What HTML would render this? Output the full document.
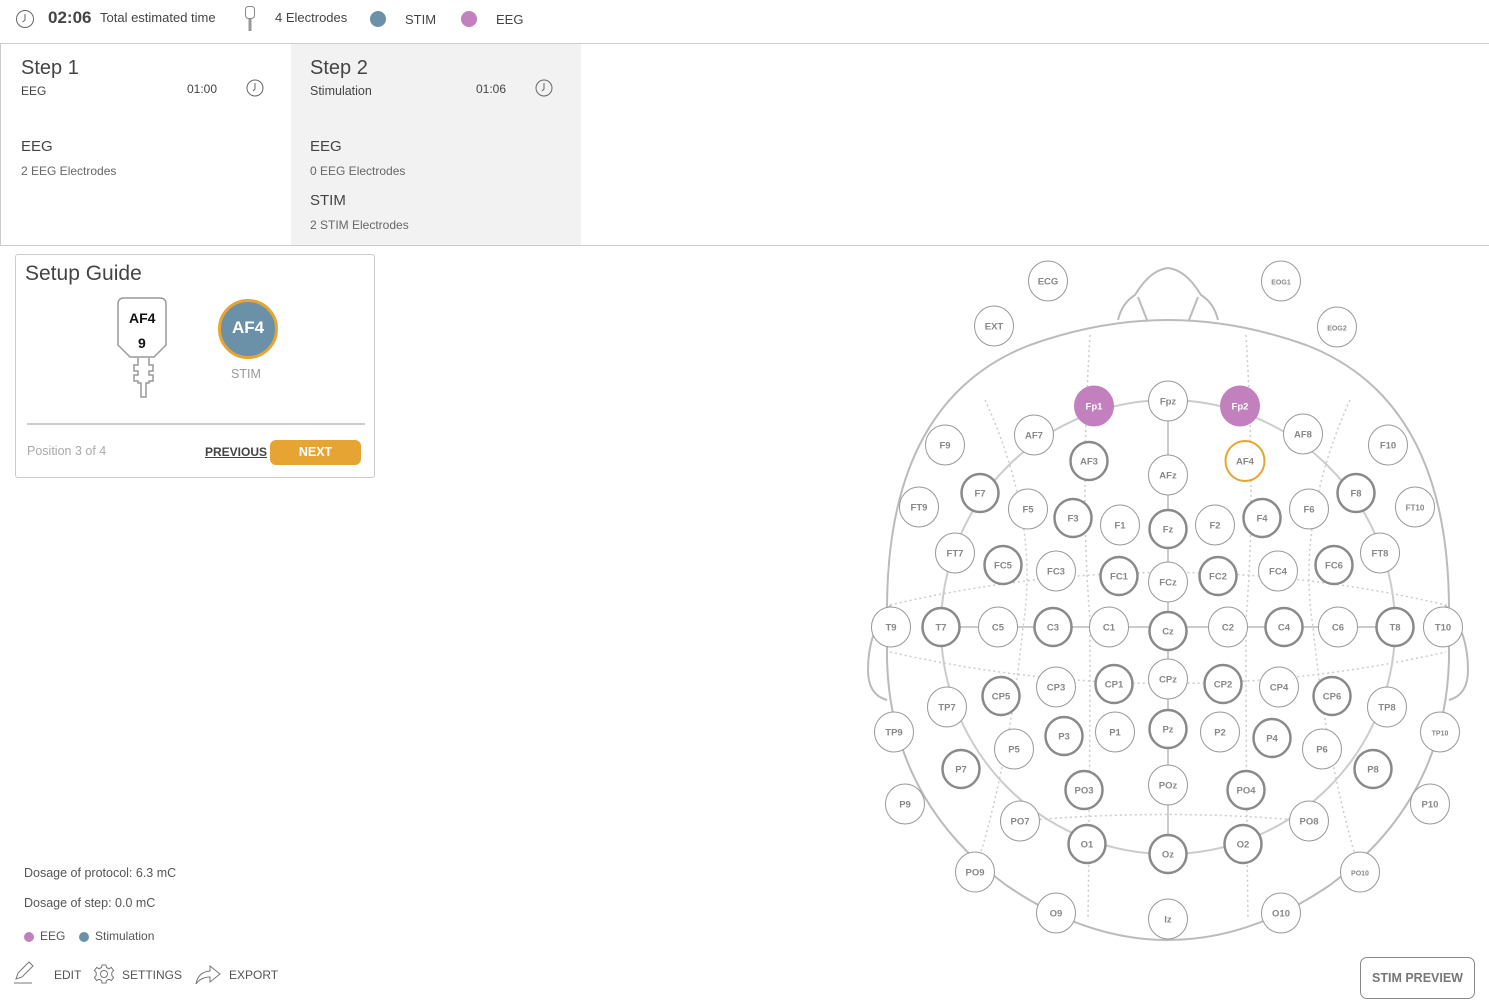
<!DOCTYPE html>
<html><head><meta charset="utf-8"><style>
*{box-sizing:border-box;margin:0;padding:0}
body{width:1489px;height:1008px;overflow:hidden;background:#fff;font-family:"Liberation Sans",sans-serif;color:#444;position:relative}
.abs{position:absolute}
.top{position:absolute;left:0;top:0;width:1489px;height:44px;border-bottom:1px solid #ccc}
.card{position:absolute;top:44px;height:202px;width:290px}
.t{position:absolute;white-space:nowrap}
</style></head><body>
<div class="top">
<svg class="abs" style="left:15px;top:9px" width="20" height="20"><circle cx="10" cy="10" r="8.5" fill="none" stroke="#666" stroke-width="1"/><path d="M10 5V11L7.5 13" fill="none" stroke="#666"/></svg>
<div class="t" style="left:48px;top:8px;font-size:17px;font-weight:bold;color:#444">02:06</div>
<div class="t" style="left:100px;top:10px;font-size:13px;color:#444">Total estimated time</div>
<svg class="abs" style="left:242px;top:5px" width="16" height="28"><rect x="3.5" y="1.5" width="9" height="12" rx="3" fill="none" stroke="#888"/><rect x="6.5" y="14" width="3" height="12" fill="#999"/></svg>
<div class="t" style="left:275px;top:10px;font-size:13px">4 Electrodes</div>
<div class="abs" style="left:370px;top:11px;width:16px;height:16px;border-radius:50%;background:#6b91a9"></div>
<div class="t" style="left:405px;top:12px;font-size:13px">STIM</div>
<div class="abs" style="left:461px;top:11px;width:16px;height:16px;border-radius:50%;background:#c280bf"></div>
<div class="t" style="left:496px;top:12px;font-size:13px">EEG</div>
</div>
<div class="card" style="left:0;border-left:1px solid #ccc;border-bottom:1px solid #ccc;width:291px">
<div class="t" style="left:20px;top:13px;font-size:20px;color:#444">Step 1</div>
<div class="t" style="left:20px;top:40px;font-size:12px">EEG</div>
<div class="t" style="left:186px;top:38px;font-size:12px">01:00</div>
<svg class="abs" style="left:245px;top:35px" width="18" height="18"><circle cx="9" cy="9" r="8" fill="none" stroke="#666"/><path d="M9 4V10L7 12" fill="none" stroke="#666"/></svg>
<div class="t" style="left:20px;top:94px;font-size:15px">EEG</div>
<div class="t" style="left:20px;top:120px;font-size:12px;color:#666">2 EEG Electrodes</div>
</div>
<div class="card" style="left:291px;background:#f2f2f2;border-bottom:1px solid #ccc">
<div class="t" style="left:19px;top:13px;font-size:20px;color:#444">Step 2</div>
<div class="t" style="left:19px;top:40px;font-size:12.5px">Stimulation</div>
<div class="t" style="left:185px;top:38px;font-size:12px">01:06</div>
<svg class="abs" style="left:244px;top:35px" width="18" height="18"><circle cx="9" cy="9" r="8" fill="none" stroke="#666"/><path d="M9 4V10L7 12" fill="none" stroke="#666"/></svg>
<div class="t" style="left:19px;top:94px;font-size:15px">EEG</div>
<div class="t" style="left:19px;top:120px;font-size:12px;color:#666">0 EEG Electrodes</div>
<div class="t" style="left:19px;top:148px;font-size:15px">STIM</div>
<div class="t" style="left:19px;top:174px;font-size:12px;color:#666">2 STIM Electrodes</div>
</div>
<div class="abs" style="left:581px;top:245px;width:908px;border-top:1px solid #ccc"></div>

<div class="abs" style="left:15px;top:254px;width:360px;height:224px;border:1px solid #ccc;border-radius:3px">
<div class="t" style="left:9px;top:7px;font-size:21px;color:#444">Setup Guide</div>
<svg class="abs" style="left:100px;top:40px" width="56" height="106">
<path d="M8 3H44Q50 3 50 9V50L38 62H14L2 50V9Q2 3 8 3Z" fill="#fff" stroke="#999" stroke-width="1.5"/>
<path d="M22 63V70H18V76H22V80H18V86H22V88H25V102H30V88H33V86H37V80H33V76H37V70H33V63" fill="none" stroke="#999" stroke-width="1.5"/>
</svg>
<div class="t" style="left:113px;top:55px;font-size:14px;font-weight:bold;color:#111">AF4</div>
<div class="t" style="left:122px;top:80px;font-size:14px;font-weight:bold;color:#111">9</div>
<div class="abs" style="left:202px;top:44px;width:60px;height:60px;border-radius:50%;background:#6b91a9;border:3px solid #e6a532"></div>
<div class="t" style="left:202px;top:63px;width:60px;text-align:center;font-size:17px;font-weight:bold;color:#fff">AF4</div>
<div class="t" style="left:215px;top:112px;font-size:12.5px;color:#999">STIM</div>
<div class="abs" style="left:11px;top:168px;width:338px;border-top:2px solid #ccc"></div>
<div class="t" style="left:11px;top:189px;font-size:12.5px;color:#aaa">Position 3 of 4</div>
<div class="t" style="left:189px;top:190px;font-size:12px;font-weight:bold;color:#444;text-decoration:underline">PREVIOUS</div>
<div class="abs" style="left:254px;top:185px;width:91px;height:25px;border-radius:6px;background:#e6a532;color:#fff;font-size:12.5px;font-weight:bold;text-align:center;line-height:25px">NEXT</div>
</div>

<div class="t" style="left:24px;top:866px;font-size:12.5px;color:#555">Dosage of protocol: 6.3 mC</div>
<div class="t" style="left:24px;top:896px;font-size:12.5px;color:#555">Dosage of step: 0.0 mC</div>
<div class="abs" style="left:24px;top:932px;width:10px;height:10px;border-radius:50%;background:#c280bf"></div>
<div class="t" style="left:40px;top:929px;font-size:12px;color:#555">EEG</div>
<div class="abs" style="left:79px;top:932px;width:10px;height:10px;border-radius:50%;background:#6b91a9"></div>
<div class="t" style="left:95px;top:929px;font-size:12px;color:#555">Stimulation</div>
<svg class="abs" style="left:12px;top:961px" width="24" height="24"><path d="M4 18L6 12L17 1L21 5L10 16Z" fill="none" stroke="#777"/><path d="M2 22H20" stroke="#777"/></svg>
<div class="t" style="left:54px;top:968px;font-size:12px;color:#555">EDIT</div>
<svg class="abs" style="left:93px;top:963px" width="22" height="22"><circle cx="11" cy="11" r="3.5" fill="none" stroke="#777"/><path d="M9 2H13L13.5 4.5L16 5.8L18.3 4.4L20.6 7.6L18.8 9.5V12.5L20.6 14.4L18.3 17.6L16 16.2L13.5 17.5L13 20H9L8.5 17.5L6 16.2L3.7 17.6L1.4 14.4L3.2 12.5V9.5L1.4 7.6L3.7 4.4L6 5.8L8.5 4.5Z" fill="none" stroke="#777"/></svg>
<div class="t" style="left:122px;top:968px;font-size:12px;color:#555">SETTINGS</div>
<svg class="abs" style="left:194px;top:962px" width="28" height="24"><path d="M2 22Q4 10 16 9V4L26 12L16 20V15Q7 15 2 22Z" fill="none" stroke="#777"/></svg>
<div class="t" style="left:229px;top:968px;font-size:12px;color:#555">EXPORT</div>
<div class="abs" style="left:1360px;top:957px;width:115px;height:42px;border:1.5px solid #888;border-radius:7px;text-align:center;line-height:40px;font-size:12.5px;font-weight:bold;color:#777">STIM PREVIEW</div>

<svg class="abs" style="left:0;top:0" width="1489" height="1008" font-family="Liberation Sans, sans-serif">
<g fill="none" stroke="#bbb" stroke-width="2">
<path d="M1118 320Q1122 303 1135 295Q1150 270 1168 268Q1186 270 1201 295Q1214 303 1218 320"/>
<path d="M1138 297L1147 320M1198 297L1189 320"/>
<path d="M887 610Q887 400 1030 345Q1100 320 1168 320Q1236 320 1306 345Q1449 400 1449 610L1449 660Q1445 800 1330 885Q1250 940 1168 940Q1086 940 1006 885Q891 800 887 660Z"/>
<path d="M891 605Q868 630 868 670Q868 695 887 700M1445 605Q1468 630 1468 670Q1468 695 1449 700"/>
</g>
<g fill="none" stroke="#ccc" stroke-width="2">
<circle cx="1168" cy="627" r="227"/>
<path d="M1168 401V854M941 627H1395"/>
</g>
<g fill="none" stroke="#ccc" stroke-width="1.5" stroke-dasharray="2 3">
<path d="M890 605Q1168 540 1446 605"/>
<path d="M890 652Q1168 715 1446 652"/>
<path d="M1020 821Q1168 808 1309 821"/>
<path d="M1090 335Q1080 500 1090 620Q1090 780 1088 920"/>
<path d="M1246 335Q1256 500 1246 620Q1246 780 1248 920"/>
<path d="M985 400Q1040 520 1023 627Q1010 760 975 872"/>
<path d="M1350 400Q1296 520 1313 627Q1326 760 1360 872"/>
</g>
<g id="els" font-size="9.5" font-weight="bold" text-anchor="middle" fill="#888"></g>
</svg>
<script>
var E=[["ECG",1048,281],["EOG1",1281,281,0,7],["EXT",994,326],["EOG2",1337,327,0,7],
["Fp1",1094,406,"p"],["Fpz",1168,401],["Fp2",1240,406,"p"],
["AF7",1034,435],["AF3",1089,461,1],["AFz",1168,475],["AF4",1245,461,"o"],["AF8",1303,434],
["F9",945,445],["F10",1388,445],
["F7",980,493,1],["F5",1028,509],["F3",1073,518,1],["F1",1120,525],["Fz",1168,529,1],["F2",1215,525],["F4",1262,518,1],["F6",1309,509],["F8",1356,493,1],
["FT9",919,507],["FT10",1415,507,0,8],
["FT7",955,553],["FC5",1003,565,1],["FC3",1056,571],["FC1",1119,576,1],["FCz",1168,582],["FC2",1218,576,1],["FC4",1278,571],["FC6",1334,565,1],["FT8",1380,553],
["T9",891,627],["T7",941,627,1],["C5",998,627],["C3",1053,627,1],["C1",1109,627],["Cz",1168,631,1],["C2",1228,627],["C4",1284,627,1],["C6",1338,627],["T8",1395,627,1],["T10",1443,627],
["CP5",1001,696,1],["CP3",1056,687],["CP1",1114,684,1],["CPz",1168,679],["CP2",1223,684,1],["CP4",1279,687],["CP6",1332,696,1],["TP7",947,707],["TP8",1387,707],
["TP9",894,732],["TP10",1440,732,0,7],
["P7",961,769,1],["P5",1014,749],["P3",1064,736,1],["P1",1115,732],["Pz",1168,729,1],["P2",1220,732],["P4",1272,738,1],["P6",1322,749],["P8",1373,769,1],
["P9",905,804],["P10",1430,804],
["PO3",1084,790,1],["POz",1168,785],["PO4",1246,790,1],["PO7",1020,821],["PO8",1309,821],
["O1",1087,844,1],["Oz",1168,854,1],["O2",1243,844,1],
["PO9",975,872],["PO10",1360,872,0,7],["O9",1056,913],["Iz",1168,919],["O10",1281,913]];
var s="";E.forEach(function(e){var t=e[3],fs=e[4]||9.5,fill="#fff",st="#999",sw=1,tc="#888";
if(t==1){st="#8a8a8a";sw=2.5}if(t=="p"){fill="#c280bf";st="#c280bf";tc="#fff"}if(t=="o"){st="#e6a532";sw=2}
s+='<ellipse cx="'+e[1]+'" cy="'+e[2]+'" rx="'+(t==1?18.5:19.5)+'" ry="'+(t==1?19:20)+'" fill="'+fill+'" stroke="'+st+'" stroke-width="'+sw+'"/>';
s+='<text x="'+e[1]+'" y="'+(e[2]+3.5)+'" font-size="'+fs+'" fill="'+tc+'">'+e[0]+'</text>';});
document.getElementById("els").innerHTML=s;
</script>
</body></html>
